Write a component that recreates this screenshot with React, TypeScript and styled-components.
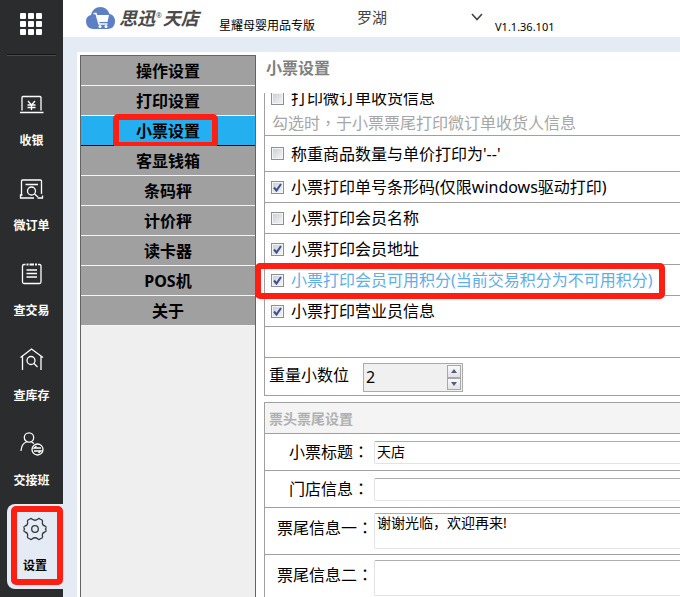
import React, { useState } from "react";
import styled, { createGlobalStyle, css } from "styled-components";

const sans = `"Noto Sans", "Noto Sans CJK SC", sans-serif`;
const centred = `"Noto Sans", "Noto Sans CJK TC", sans-serif`;
const line = "#a0a0a0";
const pale = "#e4ebf4";

const GlobalStyle = createGlobalStyle`
  * { box-sizing: border-box; }
  body { margin: 0; background: #fff; color: #000; font: 16px/24px ${sans}; }
  button, input, select, textarea { font: inherit; color: inherit; margin: 0; border-radius: 0; outline: none; }
`;

const Page = styled.div`
  display: flex;
  height: 100vh;
  overflow: hidden;
`;

const ring = css`
  content: "";
  position: absolute;
  border: 6px solid #ff1e12;
  border-radius: 5px;
  pointer-events: none;
`;

/* Left rail */
const Rail = styled.nav`
  flex: none;
  width: 63px;
  background: #2b2c2e;
  color: #fff;
`;

const AppsButton = styled.button`
  display: grid;
  place-items: center;
  width: 100%;
  height: 54px;
  padding: 0 2px 6px 0;
  border: 0;
  background: none;
`;

const RailDivider = styled.hr`
  height: 2px;
  margin: 0 7px 23px;
  border: 0;
  border-top: 1px solid #151617;
  background: #48494b;
`;

const RailItem = styled.button<{ $active?: boolean }>`
  position: relative;
  display: flex;
  flex-direction: column;
  align-items: center;
  gap: 14px;
  width: 100%;
  height: 85px;
  padding: 12px 0 0;
  border: 0;
  background: none;
  font-size: 12px;
  font-weight: 700;
  line-height: 20px;
  svg { display: block; }
  ${(p) =>
    p.$active &&
    css`
      width: 56px;
      margin-left: 7px;
      border-radius: 8px 0 0 8px;
      background: ${pale};
      color: #000;
      &::after { ${ring} inset: 2px 0 4px 4px; }
    `}
`;

/* Top bar */
const Body = styled.div`
  flex: 1;
  min-width: 0;
  display: flex;
  flex-direction: column;
  background: ${pale};
`;

const TopBar = styled.header`
  display: flex;
  flex: none;
  height: 37px;
  padding-left: 22px;
  background: #fff;
`;

const Brand = styled.div`
  display: flex;
  align-items: center;
  gap: 3px;
  width: 134px;
  padding-bottom: 2px;
  color: #4a4a4a;
  font-size: 18px;
  font-weight: 700;
  font-style: italic;
  white-space: nowrap;
  svg { flex: none; }
  sup { margin: 0 1px; font-size: 7px; line-height: 8px; font-style: normal; font-weight: 400; }
`;

const Edition = styled.span`
  width: 138px;
  padding-top: 14px;
  font-size: 12px;
`;

const StorePicker = styled.label`
  display: grid;
  align-items: center;
  width: 138px;
  height: 34px;
  svg { grid-area: 1 / 1; justify-self: end; margin-right: 12px; pointer-events: none; }
`;

const StoreSelect = styled.select`
  grid-area: 1 / 1;
  appearance: none;
  width: 100%;
  padding: 0;
  border: 0;
  background: none;
  color: #444;
  font-size: 15px;
`;

const Version = styled.span`
  padding-top: 15px;
  font-size: 11px;
`;

/* Work area */
const Work = styled.div`
  flex: 1;
  min-height: 0;
  display: flex;
  gap: 8px;
  margin: 15px 0 0 14px;
  padding: 3px 0 0 3px;
  background: #fff;
`;

const Menu = styled.nav`
  flex: none;
  width: 176px;
  border: 1px solid #646464;
  border-bottom: 0;
  background: #efefef;
`;

const MenuItem = styled.button<{ $active?: boolean }>`
  position: relative;
  display: block;
  width: 100%;
  height: 30px;
  padding: 0;
  border: 0;
  border-bottom: 1px solid ${(p) => (p.$active ? "#000" : "#f4f4f4")};
  background: ${(p) => (p.$active ? "#24b0f0" : "#a0a0a0")};
  font-weight: 700;
  ${(p) => p.$active && css`&::after { ${ring} inset: -2px 37px -3px 32px; }`}
`;

const Panel = styled.main`
  flex: 1;
  min-width: 0;
`;

const PanelTitle = styled.h1`
  height: 38px;
  margin: 0;
  padding: 1px 0 0 2px;
  color: #808080;
  font-size: 16px;
  line-height: 24px;
`;

const Options = styled.section`
  border: solid ${line};
  border-width: 0 0 1px 1px;
`;

const ClippedGroup = styled.div`
  display: flex;
  flex-direction: column;
  justify-content: flex-end;
  height: 43px;
  overflow: hidden;
  border-bottom: 1px solid ${line};
`;

const Hint = styled.p`
  flex: none;
  margin: 0;
  padding-left: 7px;
  color: #a6a6a6;
  font-family: ${centred};
  line-height: 24px;
`;

const OptionRow = styled.label<{ $h?: number; $plain?: boolean; $marked?: boolean }>`
  position: relative;
  flex: none;
  display: flex;
  align-items: center;
  gap: 7px;
  height: ${(p) => p.$h ?? 31}px;
  padding-left: 6px;
  border-bottom: ${(p) => (p.$plain ? "0" : `1px solid ${line}`)};
  color: ${(p) => (p.$marked ? "#62aee6" : "#000")};
  white-space: nowrap;
  ${(p) => p.$marked && css`&::after { ${ring} inset: -2px 15px -4px -10px; }`}
`;

const Tick = styled.span`
  display: grid;
  svg { grid-area: 1 / 1; pointer-events: none; }
`;

const TickInput = styled.input`
  grid-area: 1 / 1;
  appearance: none;
  width: 13px;
  height: 13px;
  border: 1px solid #8e8f8f;
  background: linear-gradient(135deg, #c9cdd2, #f6f6f6);
  box-shadow: inset 0 0 0 1px #f4f4f4;
`;

const Blank = styled.div`
  height: 31px;
  border-bottom: 1px solid ${line};
`;

const NumberRow = styled.div`
  display: flex;
  align-items: center;
  gap: 14px;
  height: 37px;
  padding-left: 4px;
  label { padding-bottom: 4px; }
`;

const Stepper = styled.div`
  display: flex;
  width: 100px;
  height: 29px;
  margin-top: 2px;
  padding: 1px;
  border: 1px solid #ababab;
  background: #f0f0f0;
`;

const NumberInput = styled.input`
  flex: 1;
  min-width: 0;
  padding: 0 1px 2px;
  border: 0;
  background: none;
  appearance: textfield;
  &::-webkit-inner-spin-button { appearance: none; }
`;

const StepButtons = styled.div`
  display: grid;
  width: 14px;
  button {
    display: grid;
    place-items: center;
    padding: 0;
    border: 1px solid #a8a8a8;
    background: linear-gradient(#fafafa, #e2e2e2);
  }
`;

const Receipt = styled.section`
  margin-top: 6px;
  border: solid ${line};
  border-width: 1px 0 0 1px;
`;

const ReceiptTitle = styled.h2`
  height: 31px;
  margin: 0;
  padding: 1px 0 0 4px;
  border-bottom: 1px solid ${line};
  background: #f4f4f4;
  color: #b0b0b0;
  font-size: 14px;
  line-height: 30px;
`;

const FieldRow = styled.div<{ $tall?: boolean }>`
  display: flex;
  align-items: center;
  height: ${(p) => (p.$tall ? 47 : 37)}px;
  border-bottom: 1px solid ${line};
`;

const FieldLabel = styled.label<{ $tall?: boolean }>`
  flex: none;
  width: 109px;
  padding-right: ${(p) => (p.$tall ? 1 : 5)}px;
  padding-bottom: ${(p) => (p.$tall ? 6 : 0)}px;
  text-align: right;
  span { font-family: ${centred}; }
`;

const box = css`
  flex: 1;
  min-width: 0;
  padding: 0 2px;
  border: 1px solid #e2e3ea;
  border-top-color: #abadb3;
  border-right: 0;
  border-radius: 2px 0 0 2px;
  background: #fff;
  font-size: 14px;
  line-height: 18px;
`;
const TextInput = styled.input`${box} height: 23px; padding-bottom: 2px;`;
const TextBox = styled.textarea`${box} height: 36px; resize: none; overflow: hidden;`;

const Glyph = ({ children }: { children: React.ReactNode }) => (
  <svg width="26" height="26" viewBox="0 0 26 26" fill="none" stroke="currentColor" strokeWidth="1.3">
    {children}
  </svg>
);

const railItems: { name: string; icon: React.ReactNode }[] = [
  {
    name: "收银",
    icon: <path d="M3 19.500V6.500q0-1 1-1H21q1 0 1 1V19.500M1 21.500H24.500M9 10l3.500 4 3.500-4M8.500 14h8M8.500 16.500h8M12.500 14v5" />,
  },
  {
    name: "微订单",
    icon: (
      <>
        <path d="M2.500 19V5q0-1 1-1H21.500q1 0 1 1V18M6.500 8.500H19M3.500 19H1.500v3H15M18.500 22H23.500V19.500" />
        <circle cx="12.500" cy="15" r="4" />
        <path d="M15.500 18l3.500 3" />
      </>
    ),
  },
  {
    name: "查交易",
    icon: (
      <>
        <path d="M6.500 3.500H5q-1.500 0-1.500 1.500V21q0 1.500 1.500 1.500H20.500q1.500 0 1.500-1.500V5q0-1.500-1.500-1.500H19M7.500 9h10.500M7.500 12.500h10.500M7.500 16h10.500" />
        <path d="M7.500 3.500H9.500M10.500 3.500H15M16 3.500H18" strokeWidth="2" />
      </>
    ),
  },
  {
    name: "查库存",
    icon: (
      <>
        <path d="M1.500 11.500L12.500 3L24 11.500M3.500 10V24M22 10V24" />
        <circle cx="12" cy="14.500" r="4" />
        <path d="M15 17.500l3.500 3.500" />
      </>
    ),
  },
  {
    name: "交接班",
    icon: (
      <>
        <circle cx="10" cy="6.500" r="4.700" />
        <path d="M2 20Q2.500 12.500 7.500 11M12.500 11l2.500 1.500" />
        <circle cx="18.500" cy="18.500" r="5.500" />
        <path d="M22 17H15l2.500-2M15 20H22l-2.500 2" />
      </>
    ),
  },
  {
    name: "设置",
    icon: (
      <>
        <path
          stroke="#35383d"
          strokeLinejoin="round"
          d="M8 3Q9 2 10 3Q13 5.500 16 3Q17 2 18 3L20 4Q21 5 20.300 7Q20.500 9.500 23 10Q24.500 10.500 24 12Q23 13 24 14Q24.500 15.500 23 16Q20.500 16.500 20.300 19Q21 21 20 22L18 23Q17 24 16 23Q13 20.500 10 23Q9 24 8 23L6 22Q5 21 5.700 19Q5.500 16.500 3 16Q1.500 15.500 2 14Q3 13 2 12Q1.500 10.500 3 10Q5.500 9.500 5.700 7Q5 5 6 4Z"
        />
        <circle cx="13" cy="13" r="3.300" stroke="#35383d" />
      </>
    ),
  },
];

const menuItems = ["操作设置", "打印设置", "小票设置", "客显钱箱", "条码秤", "计价秤", "读卡器", "POS机", "关于"];

type OptionProps = { text: string; checked?: boolean; h?: number; plain?: boolean; marked?: boolean };

function Option({ text, checked = false, h, plain, marked }: OptionProps) {
  const [on, setOn] = useState(checked);
  return (
    <OptionRow $h={h} $plain={plain} $marked={marked}>
      <Tick>
        <TickInput type="checkbox" checked={on} onChange={() => setOn(!on)} />
        {on && (
          <svg width="13" height="13" viewBox="0 0 13 13" fill="none" stroke="#3c4f94" strokeWidth="2">
            <path d="M3 6.500L5.500 9.500L10 3" />
          </svg>
        )}
      </Tick>
      {text}
    </OptionRow>
  );
}

type FieldProps = { id: string; label: string; value?: string; tall?: boolean };

function Field({ id, label, value = "", tall }: FieldProps) {
  return (
    <FieldRow $tall={tall}>
      <FieldLabel htmlFor={id} $tall={tall}>
        {label}
        <span>：</span>
      </FieldLabel>
      {tall ? <TextBox id={id} defaultValue={value} /> : <TextInput id={id} defaultValue={value} />}
    </FieldRow>
  );
}

export default function App() {
  const [digits, setDigits] = useState(2);
  const [active, setActive] = useState("小票设置");
  return (
    <Page>
      <GlobalStyle />
      <Rail>
        <AppsButton aria-label="应用">
          <svg width="22" height="22" viewBox="0 0 22 22" fill="#fff">
            {[0, 8, 16].map((y) => [0, 8, 16].map((x) => <rect key={`${x}-${y}`} x={x} y={y} width="6" height="6" rx="1" />))}
          </svg>
        </AppsButton>
        <RailDivider />
        {railItems.map((item) => (
          <RailItem key={item.name} $active={item.name === "设置"}>
            <Glyph>{item.icon}</Glyph>
            {item.name}
          </RailItem>
        ))}
      </Rail>
      <Body>
        <TopBar>
          <Brand>
            <svg width="31" height="24" viewBox="0 0 31 24">
              <path
                fill="#5d7fc4"
                d="M8 23Q1 22 1 15.500Q1 10 6 9Q8 1 15.500 1Q22 1 24.500 8Q30 9 30 15.500Q30 22 23 23Z"
              />
              <path d="M8.500 7.500H11L14 18H22.500" fill="none" stroke="#fff" strokeWidth="1.500" />
              <path d="M12 9H24L22.500 16H14Z" fill="#fff" />
              <circle cx="15" cy="20.500" r="1.500" fill="#fff" />
              <circle cx="21" cy="20.500" r="1.500" fill="#fff" />
            </svg>
            <span>
              思迅<sup>®</sup>天店
            </span>
          </Brand>
          <Edition>星耀母婴用品专版</Edition>
          <StorePicker>
            <StoreSelect aria-label="门店">
              <option>罗湖</option>
            </StoreSelect>
            <svg width="12" height="8" viewBox="0 0 12 8" fill="none" stroke="#444" strokeWidth="1.600">
              <path d="M1 1L6 6.500L11 1" />
            </svg>
          </StorePicker>
          <Version>V1.1.36.101</Version>
        </TopBar>
        <Work>
          <Menu>
            {menuItems.map((name) => (
              <MenuItem key={name} $active={name === active} onClick={() => setActive(name)}>
                {name}
              </MenuItem>
            ))}
          </Menu>
          <Panel>
            <PanelTitle>小票设置</PanelTitle>
            <Options>
              <ClippedGroup>
                <Option text="打印微订单收货信息" h={26} plain />
                <Hint>勾选时，于小票票尾打印微订单收货人信息</Hint>
              </ClippedGroup>
              <Option text="称重商品数量与单价打印为'--'" h={36} />
              <Option text="小票打印单号条形码(仅限windows驱动打印)" checked />
              <Option text="小票打印会员名称" />
              <Option text="小票打印会员地址" checked />
              <Option text="小票打印会员可用积分(当前交易积分为不可用积分)" checked marked />
              <Option text="小票打印营业员信息" checked />
              <Blank />
              <NumberRow>
                <label htmlFor="digits">重量小数位</label>
                <Stepper>
                  <NumberInput
                    id="digits"
                    type="number"
                    value={digits}
                    onChange={(e) => setDigits(Number(e.target.value))}
                  />
                  <StepButtons>
                    <button aria-label="增加" onClick={() => setDigits(digits + 1)}>
                      <svg width="6" height="4" fill="#4d6082">
                        <path d="M0 4L3 0L6 4Z" />
                      </svg>
                    </button>
                    <button aria-label="减少" onClick={() => setDigits(Math.max(0, digits - 1))}>
                      <svg width="6" height="4" fill="#4d6082">
                        <path d="M0 0L3 4L6 0Z" />
                      </svg>
                    </button>
                  </StepButtons>
                </Stepper>
              </NumberRow>
            </Options>
            <Receipt>
              <ReceiptTitle>票头票尾设置</ReceiptTitle>
              <Field id="title" label="小票标题" value="天店" />
              <Field id="store" label="门店信息" />
              <Field id="tail1" label="票尾信息一" value="谢谢光临，欢迎再来!" tall />
              <Field id="tail2" label="票尾信息二" tall />
            </Receipt>
          </Panel>
        </Work>
      </Body>
    </Page>
  );
}
